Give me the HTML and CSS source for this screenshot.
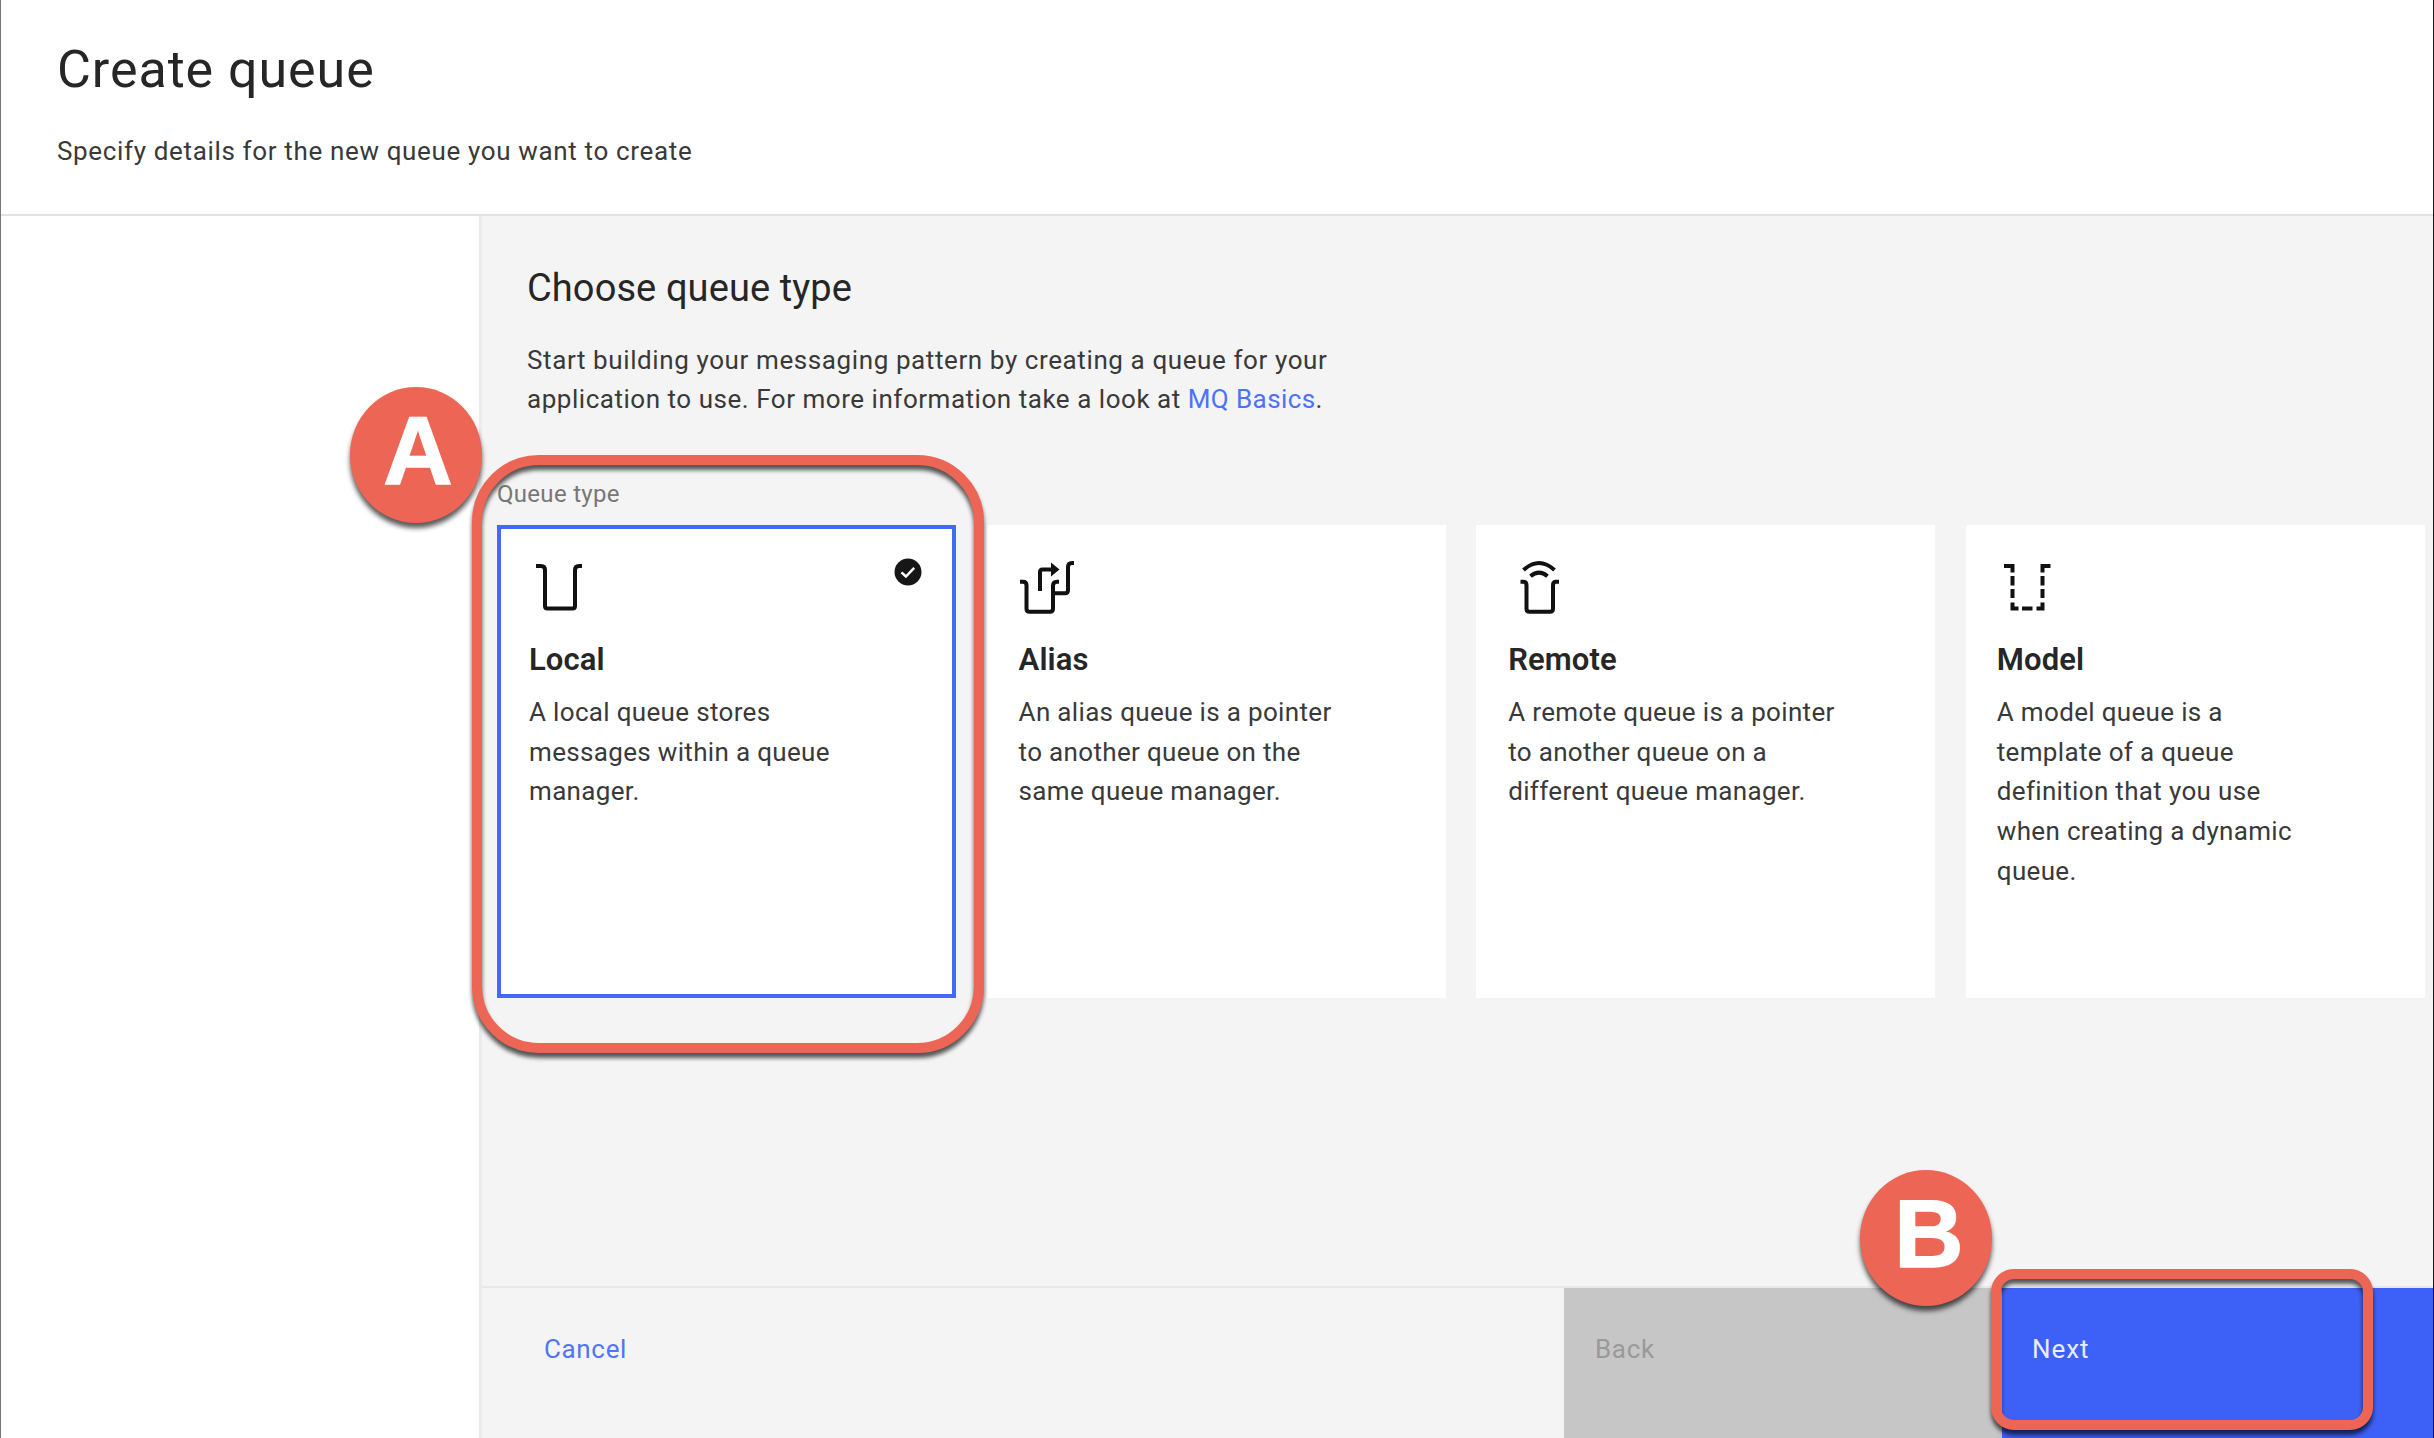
FILE: index.html
```
<!DOCTYPE html>
<html lang="en">
<head>
<meta charset="utf-8">
<title>Create queue</title>
<link rel="stylesheet" href="styles.css">
</head>
<body>
<div class="page">
  <header class="header">
    <h1 class="title">Create queue</h1>
    <p class="subtitle">Specify details for the new queue you want to create</p>
  </header>
  <div class="body">
    <aside class="sidebar"></aside>
    <main class="main">
      <section class="content">
        <h2 class="section-title">Choose queue type</h2>
        <p class="intro">Start building your messaging pattern by creating a queue for your<br><span class="intro-line">application to use. For more information take a look at <a class="link">MQ Basics</a>.</span></p>
        <div class="label">Queue type</div>
        <div class="cards">
          <article class="card card-selected">
            <svg class="check" viewBox="0 0 28 28"><circle cx="14" cy="14" r="13.5" fill="#161616"/><path d="M7.5 14.3l4.4 4.2 8.3-8.6" fill="none" stroke="#fff" stroke-width="2.5"/></svg>
            <svg class="icon" viewBox="0 0 60 60"><path d="M7 10h5q4 0 4 4v36q0 2.500 2.500 2.500h25q2.500 0 2.500-2.500V14q0-4 4-4h3"/></svg>
            <h3 class="name">Local</h3>
            <p class="desc">A local queue stores<br>messages within a queue<br>manager.</p>
          </article>
          <article class="card">
            <svg class="icon" viewBox="0 0 60 60"><path d="M1 25.700h3q3.500 0 3.500 3.500v23.500q0 3 3 3h20.500q3 0 3-3v-23q0-4 4-4h2M21 35V16q0-2.500 2.500-2.500H34M34.500 37.300H46q3 0 3-3V11q0-4 4-4h2"/><path class="solid" d="M32 6.500l8.500 7-8.500 7z"/></svg>
            <h3 class="name">Alias</h3>
            <p class="desc">An alias queue is a pointer<br>to another queue on the<br>same queue manager.</p>
          </article>
          <article class="card">
            <svg class="icon" viewBox="0 0 60 60"><path d="M12.500 25.700h3q3 0 3 3.500v23.500q0 3 3 3h20.500q3 0 3-3v-23.500q0-3.500 3-3.500h3M15.500 14Q31 0 46.500 14M22.500 20.200Q31 13 39.500 20.200"/></svg>
            <h3 class="name">Remote</h3>
            <p class="desc">A remote queue is a pointer<br>to another queue on a<br>different queue manager.</p>
          </article>
          <article class="card">
            <svg class="icon" viewBox="0 0 60 60"><path d="M7 10H15.500v6.500M15.500 20v9.500M15.500 33v9M15.500 46.500v6h6M25 52.500h10.500M39.500 52.500h6v-6M45.500 42v-9M45.500 29.500V20M45.500 16.500V10h8"/></svg>
            <h3 class="name">Model</h3>
            <p class="desc">A model queue is a<br>template of a queue<br>definition that you use<br>when creating a dynamic<br>queue.</p>
          </article>
        </div>
      </section>
      <footer class="footer">
        <button class="btn btn-cancel">Cancel</button>
        <button class="btn btn-back">Back</button>
        <button class="btn btn-next">Next</button>
      </footer>
    </main>
  </div>
  <div class="outline outline-card"></div>
  <div class="outline outline-next"></div>
  <div class="marker marker-a">A</div>
  <div class="marker marker-b">B</div>
</div>
</body>
</html>
```
FILE: styles.css
```
* { box-sizing: border-box; margin: 0; padding: 0; }

body {
  width: 2434px;
  height: 1438px;
  overflow: hidden;
  background: #fff;
  color: #262626;
  font-family: Roboto, "Liberation Sans", sans-serif;
  font-size: 26px;
}

.page {
  position: relative;
  display: flex;
  flex-direction: column;
  height: 1438px;
  border-left: 1px solid #767676;
  border-right: 1px solid #161616;
  overflow: hidden;
}

/* Header */
.header {
  display: flex;
  flex-direction: column;
  gap: 31px;
  height: 216px;
  padding: 38px 56px 0;
  border-bottom: 2px solid #e3e3e3;
}
.title { font-size: 52px; line-height: 64px; font-weight: 400; letter-spacing: 0.95px; }
.subtitle { line-height: 36px; letter-spacing: 0.65px; color: #393939; }

/* Body */
.body { display: flex; flex: 1; }
.sidebar { width: 478px; }
.main {
  display: flex;
  flex: 1;
  flex-direction: column;
  min-width: 0;
  background: #f4f4f4;
  border-left: 3px solid #ebebeb;
}
.content { flex: 1; padding: 48px 0 0 15px; }
.section-title {
  padding-left: 30px;
  font-size: 38px;
  line-height: 48px;
  font-weight: 400;
  letter-spacing: 0.1px;
}
.intro {
  padding: 29px 0 0 30px;
  line-height: 38.5px;
  letter-spacing: 0.6px;
  color: #393939;
}
.intro-line { letter-spacing: 0.53px; }
.link { color: #4c72fa; letter-spacing: 0.4px; }
.label {
  padding: 60px 0 0;
  font-size: 24px;
  line-height: 32px;
  letter-spacing: 0.3px;
  color: #777;
}

/* Queue type cards */
.cards {
  display: grid;
  grid-template-columns: repeat(4, 459px);
  column-gap: 30.6px;
  padding-top: 15px;
}
.card {
  position: relative;
  height: 473px;
  padding: 31px 31px 0 32px;
  background: #fff;
}
.card:last-child { padding-left: 31px; }
.card-selected { outline: 4px solid #4568f7; outline-offset: -4px; }
.icon { display: block; width: 60px; height: 60px; fill: none; stroke: #111; stroke-width: 4; }
.solid { fill: #111; stroke: none; }
.check { position: absolute; top: 33px; right: 34px; width: 28px; height: 28px; }
.name {
  margin-top: 24px;
  font-size: 31px;
  line-height: 40px;
  font-weight: 600;
  letter-spacing: 0.1px;
}
.desc { margin-top: 13px; line-height: 39.7px; letter-spacing: 0.33px; color: #393939; }

/* Footer */
.footer {
  display: flex;
  height: 152px;
  border-top: 2px solid #e8e8e8;
}
.btn {
  display: flex;
  align-items: flex-start;
  padding-top: 43px;
  border: 0;
  background: none;
  font: inherit;
  line-height: 36px;
  letter-spacing: 0.65px;
}
.btn-cancel { width: 1082px; padding-left: 62px; color: #5075fb; }
.btn-back { width: 438px; padding-left: 31px; background: #c6c6c6; color: #999; }
.btn-next { flex: 1; padding-left: 30px; background: #3d60f6; color: #e8edff; letter-spacing: 0.9px; }

/* Annotations */
.outline {
  position: absolute;
  border: 10px solid #ed6655;
  filter: drop-shadow(0 5px 2px rgba(0, 0, 0, 0.65));
}
.outline-card { left: 471px; top: 455px; width: 512px; height: 598px; border-radius: 67px; }
.outline-next { left: 1990px; top: 1269px; width: 382px; height: 161px; border-radius: 23px; }
.marker {
  position: absolute;
  display: flex;
  align-items: center;
  justify-content: center;
  width: 132px;
  height: 136px;
  border-radius: 50%;
  background: #ed6655;
  color: #fff;
  font: bold 96px/1 "Liberation Sans", sans-serif;
  -webkit-text-stroke: 1.5px #fff;
  box-shadow: 0 5px 5px rgba(0, 0, 0, 0.65);
}
.marker-a { left: 348.500px; top: 387px; padding: 0 0 8px 5px; }
.marker-b { left: 1858.500px; top: 1170px; padding: 0 0 8px 7px; }
```
